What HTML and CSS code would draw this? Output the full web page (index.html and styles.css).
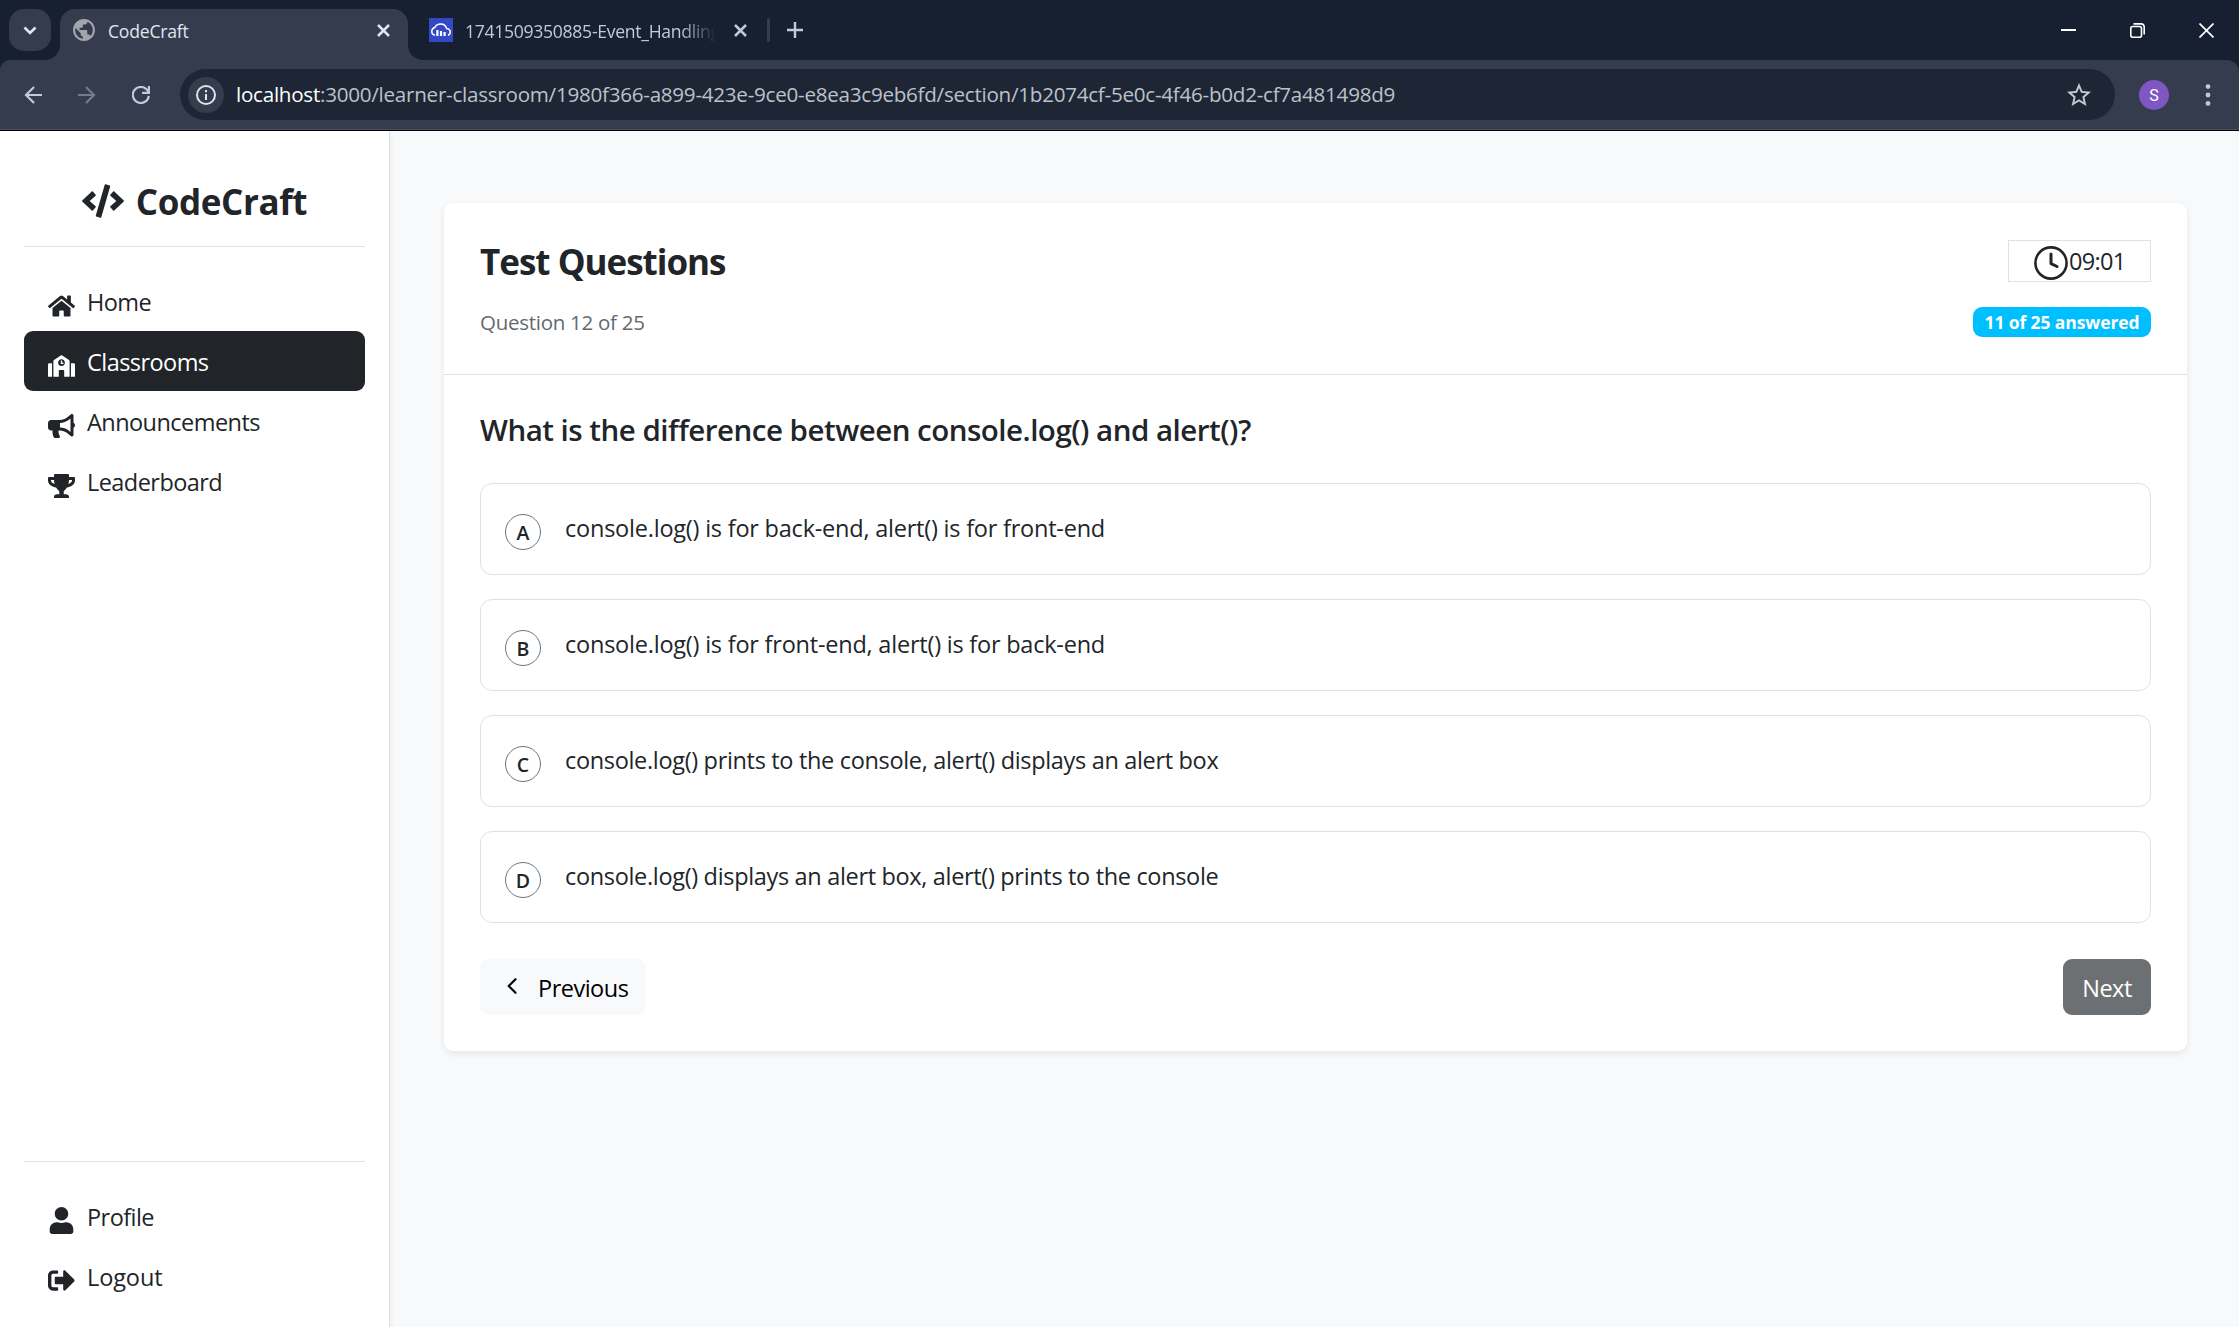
FILE: index.html
```html
<!DOCTYPE html>
<html lang="en">
<head>
<meta charset="utf-8">
<title>CodeCraft</title>
<link rel="stylesheet" href="styles.css">
</head>
<body>
<div class="browser">
  <header class="tabstrip">
    <div class="tab-search">
      <svg width="14" height="9" viewBox="0 0 14 9" fill="none" stroke="currentColor" stroke-width="2.6"><path d="M1.5 1.5 7 7l5.500-5.500"/></svg>
    </div>
    <div class="tab tab-active">
      <svg class="globe" width="22" height="22" viewBox="2 2 20 20" fill="currentColor"><path d="M12 2C6.480 2 2 6.480 2 12s4.480 10 10 10 10-4.480 10-10S17.520 2 12 2zM4 12c0-.610.080-1.210.210-1.780L8.990 15v1c0 1.100.9 2 2 2v1.930C7.060 19.430 4 16.070 4 12zm13.890 5.400c-.260-.810-1-1.400-1.900-1.400h-1v-3c0-.550-.450-1-1-1h-6v-2h2c.550 0 1-.450 1-1V7h2c1.100 0 2-.9 2-2v-.410C17.920 5.770 20 8.650 20 12c0 2.080-.810 3.980-2.110 5.400z"/></svg>
      <span class="tab-title">CodeCraft</span>
      <svg class="x" width="13" height="13" viewBox="0 0 13 13" fill="none" stroke="currentColor" stroke-width="2.500"><path d="M1 1l11 11M12 1 1 12"/></svg>
    </div>
    <div class="tab tab-idle">
      <svg width="24" height="24" viewBox="0 0 24 24"><path fill="#3448c5" d="M0 0h24v24H0z"/><path d="M6 17.200C3.800 16.700 2.600 15 2.800 13c.2-1.900 1.500-3.100 3-3.500C6.800 7.300 9 6 11.700 6c3 0 5.200 1.900 5.900 4.500 2.200.3 3.700 1.600 3.700 3.600 0 1.500-.8 2.600-2.300 3.100" fill="none" stroke="#fff" stroke-width="1.500"/><path d="M7.300 12h2.200v6H7.300zM10.900 13h2.200v5h-2.200zM14.500 14h2.200v4h-2.200z" fill="#fff"/></svg>
      <span class="tab-title tab-title-fade">1741509350885-Event_Handling</span>
      <svg class="x" width="13" height="13" viewBox="0 0 13 13" fill="none" stroke="currentColor" stroke-width="2.500"><path d="M1 1l11 11M12 1 1 12"/></svg>
    </div>
    <span class="tab-sep"></span>
    <svg class="new-tab" width="16" height="16" viewBox="0 0 16 16" stroke="currentColor" stroke-width="2.400"><path d="M8 0v16M0 8h16"/></svg>
    <div class="window-controls">
      <svg width="15" height="15" viewBox="0 0 15 15" stroke="#fff" stroke-width="2"><path d="M0 7h15"/></svg>
      <svg width="15" height="15" viewBox="0 0 15 15" fill="none" stroke="#fff" stroke-width="1.600"><rect x=".8" y="3.500" width="10.700" height="10.700" rx="2"/><path d="M3.500.9H11A3.200 3.200 0 0 1 14.200 4v7.500"/></svg>
      <svg width="15" height="15" viewBox="0 0 15 15" stroke="#fff" stroke-width="1.700"><path d="M.5.5l14 14M14.500.5l-14 14"/></svg>
    </div>
  </header>
  <div class="toolbar-bed">
  <div class="toolbar">
    <svg class="nav-icon" width="18" height="18" viewBox="0 0 18 18" fill="none" stroke="currentColor" stroke-width="2.200"><path d="M18 9H2M10 1 2 9l8 8"/></svg>
    <svg class="nav-icon muted" width="18" height="18" viewBox="0 0 18 18" fill="none" stroke="currentColor" stroke-width="2.200"><path d="M0 9h16M8 1l8 8-8 8"/></svg>
    <svg class="nav-icon" width="18" height="18" viewBox="0 0 18 18" fill="none" stroke="currentColor" stroke-width="2.200"><path d="M16.800 9.800A8 8 0 1 1 14.800 3.600L16.800 6M17 0v6.900h-7"/></svg>
    <div class="omnibox">
      <span class="site-info"><svg width="20" height="20" viewBox="0 0 20 20" fill="none" stroke="currentColor" stroke-width="2"><circle cx="10" cy="10" r="9"/><path d="M10 9v6M10 5v2.200"/></svg></span>
      <span class="url"><b>localhost</b>:3000/learner-classroom/1980f366-a899-423e-9ce0-e8ea3c9eb6fd/section/1b2074cf-5e0c-4f46-b0d2-cf7a481498d9</span>
      <svg class="star" width="24" height="23" viewBox="2 2 20 19" fill="currentColor"><path d="M22 9.240l-7.190-.620L12 2 9.190 8.630 2 9.240l5.460 4.730L5.820 21 12 17.270 18.180 21l-1.630-7.030L22 9.240zM12 15.400l-3.760 2.270 1-4.280-3.320-2.880 4.380-.380L12 6.100l1.710 4.040 4.380.380-3.320 2.880 1 4.280L12 15.400z"/></svg>
    </div>
    <span class="avatar">S</span>
    <svg class="dots" width="6" height="22" viewBox="0 0 6 22" fill="currentColor"><circle cx="3" cy="2.600" r="2.400"/><circle cx="3" cy="11" r="2.400"/><circle cx="3" cy="19.400" r="2.400"/></svg>
  </div>
  </div>
</div>

<div class="app">
  <aside class="sidebar">
    <div class="brand">
      <svg width="42" height="34" viewBox="0 0 640 512" fill="currentColor"><path d="M278.900 511.500l-61-17.700c-6.400-1.800-10-8.500-8.200-14.900L346.200 8.700c1.800-6.400 8.500-10 14.900-8.200l61 17.700c6.400 1.800 10 8.500 8.200 14.900L293.800 503.300c-1.900 6.400-8.500 10.100-14.900 8.200zm-114-112.200l43.500-46.400c4.600-4.900 4.300-12.700-.8-17.200L117 256l90.600-79.700c5.100-4.500 5.500-12.300.8-17.200l-43.500-46.400c-4.500-4.800-12.100-5.100-17-.5L3.800 247.200c-5.100 4.700-5.100 12.800 0 17.500l144.100 135.100c4.900 4.600 12.500 4.400 17-.5zm327.200.6l144.100-135.100c5.100-4.700 5.100-12.800 0-17.500L492.100 112.100c-4.800-4.500-12.400-4.300-17 .5L431.600 159c-4.600 4.900-4.300 12.700.8 17.200L523 256l-90.600 79.700c-5.100 4.500-5.500 12.300-.8 17.200l43.500 46.400c4.500 4.900 12.100 5.100 17 .6z"/></svg>
      <span>CodeCraft</span>
    </div>
    <nav class="menu">
      <a class="item"><svg width="27" height="24" viewBox="0 0 576 512" fill="currentColor"><path d="M280.370 148.260L96 300.110V464a16 16 0 0 0 16 16l112.060-.29a16 16 0 0 0 15.920-16V368a16 16 0 0 1 16-16h64a16 16 0 0 1 16 16v95.640a16 16 0 0 0 16 16.050L464 480a16 16 0 0 0 16-16V300L295.670 148.260a12.190 12.190 0 0 0-15.300 0zM571.600 251.470L488 182.560V44.050a12 12 0 0 0-12-12h-56a12 12 0 0 0-12 12v72.610L318.470 43a48 48 0 0 0-61 0L4.340 251.470a12 12 0 0 0-1.600 16.900l25.500 31A12 12 0 0 0 45.150 301l235.220-193.740a12.190 12.190 0 0 1 15.300 0L530.900 301a12 12 0 0 0 16.900-1.600l25.500-31a12 12 0 0 0-1.700-16.930z"/></svg><span>Home</span></a>
      <a class="item active"><svg width="27" height="22" viewBox="0 0 640 512" fill="currentColor"><path d="M0 224v272c0 8.840 7.160 16 16 16h80V192H32c-17.670 0-32 14.330-32 32zm360-48h-24v-40c0-4.420-3.580-8-8-8h-16c-4.420 0-8 3.580-8 8v64c0 4.420 3.580 8 8 8h48c4.420 0 8-3.580 8-8v-16c0-4.420-3.580-8-8-8zm137.750-63.960l-160-106.670a32.020 32.020 0 0 0-35.500 0l-160 106.670A32.002 32.002 0 0 0 128 138.660V512h128V368c0-8.840 7.160-16 16-16h96c8.840 0 16 7.160 16 16v144h128V138.670c0-10.700-5.350-20.690-14.250-26.630zM320 256c-44.180 0-80-35.820-80-80s35.820-80 80-80 80 35.820 80 80-35.820 80-80 80zm288-64h-64v320h80c8.840 0 16-7.160 16-16V224c0-17.670-14.330-32-32-32z"/></svg><span>Classrooms</span></a>
      <a class="item"><svg width="27" height="24" viewBox="0 0 576 512" fill="currentColor"><path d="M576 240c0-23.630-12.950-44.040-32-55.120V32.010C544 23.260 537.020 0 512 0c-7.120 0-14.190 2.380-19.980 7.020l-85.030 68.030C364.280 109.190 310.660 128 256 128H64c-35.350 0-64 28.650-64 64v96c0 35.350 28.650 64 64 64h33.700c-1.390 10.480-2.180 21.140-2.180 32 0 39.770 9.260 77.350 25.560 110.940 5.190 10.690 16.520 17.060 28.400 17.060h74.280c26.050 0 41.690-29.840 25.900-50.560-16.400-21.520-26.150-48.360-26.150-77.440 0-11.110 1.620-21.790 4.410-32H256c54.660 0 108.280 18.810 150.980 52.950l85.030 68.030a32.023 32.023 0 0 0 19.980 7.020c24.920 0 32-22.780 32-32V295.130C563.050 284.040 576 263.630 576 240zm-96 141.420l-33.050-26.440C392.950 311.780 325.120 288 256 288v-96c69.120 0 136.950-23.780 190.950-66.980L480 98.580v282.840z"/></svg><span>Announcements</span></a>
      <a class="item"><svg width="27" height="24" viewBox="0 0 576 512" fill="currentColor"><path d="M552 64H448V24c0-13.300-10.700-24-24-24H152c-13.300 0-24 10.700-24 24v40H24C10.700 64 0 74.700 0 88v56c0 35.700 22.500 72.400 61.900 100.700 31.500 22.700 69.800 37.100 110 41.700C203.300 338.500 240 360 240 360v72h-48c-35.300 0-64 20.700-64 56v12c0 6.600 5.400 12 12 12h296c6.600 0 12-5.400 12-12v-12c0-35.300-28.700-56-64-56h-48v-72s36.700-21.500 68.100-73.600c40.300-4.600 78.600-19 110-41.700 39.300-28.300 61.900-65 61.900-100.700V88c0-13.300-10.700-24-24-24zM99.300 192.800C74.900 175.200 64 155.600 64 144v-16h64.200c1 32.600 5.800 61.200 12.800 86.200-15.100-5.200-29.200-12.400-41.700-21.400zM512 144c0 16.100-17.700 36.100-35.300 48.800-12.500 9-26.700 16.200-41.800 21.400 7-25 11.800-53.600 12.800-86.200H512v16z"/></svg><span>Leaderboard</span></a>
    </nav>
    <nav class="menu menu-bottom">
      <a class="item"><svg width="27" height="27" viewBox="-32 0 512 512" fill="currentColor"><path d="M224 256c70.700 0 128-57.300 128-128S294.700 0 224 0 96 57.300 96 128s57.300 128 128 128zm89.600 32h-16.700c-22.200 10.200-46.900 16-72.900 16s-50.600-5.800-72.900-16h-16.700C60.200 288 0 348.200 0 422.400V464c0 26.500 21.500 48 48 48h352c26.500 0 48-21.500 48-48v-41.600c0-74.200-60.200-134.400-134.400-134.400z"/></svg><span>Profile</span></a>
      <a class="item item-logout"><svg width="27" height="27" viewBox="0 0 512 512" fill="currentColor"><path d="M497 273L329 441c-15 15-41 4.500-41-17v-96H152c-13.300 0-24-10.700-24-24v-96c0-13.300 10.700-24 24-24h136V88c0-21.400 25.900-32 41-17l168 168c9.300 9.400 9.300 24.600 0 34zM192 436v-40c0-6.600-5.400-12-12-12H96c-17.700 0-32-14.300-32-32V160c0-17.700 14.300-32 32-32h84c6.600 0 12-5.400 12-12V76c0-6.600-5.400-12-12-12H96c-53 0-96 43-96 96v192c0 53 43 96 96 96h84c6.600 0 12-5.400 12-12z"/></svg><span>Logout</span></a>
    </nav>
  </aside>

  <main class="content">
    <section class="card">
      <div class="card-head">
        <div class="head-left">
          <h1>Test Questions</h1>
          <p>Question 12 of 25</p>
        </div>
        <div class="head-right">
          <div class="timer">
            <svg width="34" height="34" viewBox="0 0 34 34" fill="none" stroke="currentColor" stroke-width="2.600" stroke-linecap="round"><circle cx="17" cy="17" r="15.600"/><path d="M17 8v9.600l6 2.900" stroke-width="3" stroke-linejoin="round"/></svg>
            <span>09:01</span>
          </div>
          <span class="badge">11 of 25 answered</span>
        </div>
      </div>
      <div class="card-body">
        <h2>What is the difference between console.log() and alert()?</h2>
        <div class="options">
          <div class="option"><span class="letter">A</span><span class="answer">console.log() is for back-end, alert() is for front-end</span></div>
          <div class="option"><span class="letter">B</span><span class="answer">console.log() is for front-end, alert() is for back-end</span></div>
          <div class="option"><span class="letter">C</span><span class="answer tight">console.log() prints to the console, alert() displays an alert box</span></div>
          <div class="option"><span class="letter">D</span><span class="answer tight">console.log() displays an alert box, alert() prints to the console</span></div>
        </div>
        <div class="actions">
          <button class="btn btn-light"><svg width="10" height="16" viewBox="0 0 10 16" fill="none" stroke="currentColor" stroke-width="2.200" stroke-linecap="round" stroke-linejoin="round"><path d="M8.500 1.200 1.700 8l6.800 6.800"/></svg><span>Previous</span></button>
          <button class="btn btn-dark"><span>Next</span></button>
        </div>
      </div>
    </section>
  </main>
</div>
</body>
</html>
```
FILE: styles.css
```css
* { box-sizing: border-box; }
body {
  margin: 0;
  width: 2239px;
  height: 1327px;
  overflow: hidden;
  display: flex;
  flex-direction: column;
  font-family: "Open Sans", "Noto Sans", sans-serif;
  font-size: 23.5px;
  letter-spacing: -0.22px;
  color: #212529;
  background: #f8f9fb;
  white-space: nowrap;
}
svg { display: block; flex: none; }
h1, h2, p { margin: 0; }

/* Browser frame */
.browser { flex: none; }
.tabstrip {
  height: 60px;
  display: flex;
  align-items: center;
  background: #172030;
  font-size: 17.6px;
}
.tab-search {
  width: 42px;
  height: 42px;
  margin: 0 9px;
  border-radius: 15px;
  background: #343c4d;
  color: #e3e6ee;
  display: flex;
  align-items: center;
  justify-content: center;
}
.tab { display: flex; align-items: center; }
.tab-title { line-height: 24px; padding-top: 2px; }
.tab-active {
  position: relative;
  align-self: flex-end;
  width: 348px;
  height: 51px;
  padding: 0 18px 9px 13px;
  border-radius: 15px 15px 0 0;
  background: #343c4d;
  color: #e3e6ee;
}
.tab-active::before, .tab-active::after {
  content: "";
  position: absolute;
  bottom: 0;
  width: 15px;
  height: 15px;
}
.tab-active::before { left: -15px; background: radial-gradient(circle at 0 0, transparent 14.5px, #343c4d 15.5px); }
.tab-active::after { right: -15px; background: radial-gradient(circle at 100% 0, transparent 14.5px, #343c4d 15.5px); }
.globe { color: #a2a5aa; margin-right: 13px; }
.x { margin-left: auto; }
.tab-idle { width: 320px; margin-left: 21px; color: #c0c9de; }
.tab-idle .x { margin: 0 0 0 18px; }
.tab-title-fade {
  width: 251px;
  margin-left: 12px;
  overflow: hidden;
  letter-spacing: -0.3px;
  -webkit-mask-image: linear-gradient(90deg, #000 215px, transparent 251px);
  mask-image: linear-gradient(90deg, #000 215px, transparent 251px);
}
.tab-sep { width: 3px; height: 24px; border-radius: 2px; background: #343c4d; margin: 0 17px 0 18px; }
.new-tab { color: #c0c9de; }
.window-controls { margin-left: auto; display: flex; gap: 54px; padding-right: 25px; }
.toolbar-bed { background: #172030; }
.toolbar {
  height: 71px;
  padding: 0 28px 1px 24px;
  display: flex;
  align-items: center;
  background: #343c4d;
  border-bottom: 1px solid #000;
  box-shadow: inset 0 -1px 0 #4a5056;
  border-radius: 10px 12px 0 0;
  color: #bccbe3;
}
.nav-icon { margin-right: 36px; }
.nav-icon:nth-child(3) { margin-right: 30px; }
.muted { color: #747b8a; }
.omnibox {
  flex: 1;
  height: 51px;
  border-radius: 26px;
  padding: 0 24px 0 8px;
  display: flex;
  align-items: center;
  background: #1e2636;
  color: #bdc1c9;
  font-size: 20.6px;
  letter-spacing: -0.25px;
}
.site-info {
  width: 36px;
  height: 36px;
  border-radius: 50%;
  background: #343c4d;
  color: #e3e3e6;
  display: flex;
  align-items: center;
  justify-content: center;
}
.url { margin: -2px 0 0 12px; line-height: 28px; }
.url b { font-weight: 400; color: #fff; }
.star { margin-left: auto; color: #c7c7cb; }
.avatar {
  width: 30px;
  height: 30px;
  margin: 0 36px 0 24px;
  border-radius: 50%;
  background: #7e57c2;
  color: #fff;
  font: 16px/31px Roboto, sans-serif;
  text-align: center;
}

/* App shell */
.app { flex: 1; display: flex; min-height: 0; }
.sidebar {
  width: 390px;
  padding: 0 24px 21px;
  border-right: 1px solid #dee2e6;
  background: #fff;
  box-shadow: 0 3px 6px rgba(0, 0, 0, 0.075);
  display: flex;
  flex-direction: column;
}
.brand {
  height: 116px;
  padding-top: 26px;
  border-bottom: 1px solid #dee2e6;
  display: flex;
  align-items: center;
  justify-content: center;
  gap: 12px;
  font-size: 35px;
  font-weight: 700;
  letter-spacing: -0.4px;
}
.brand svg { margin-top: -2px; }
.menu { padding-top: 24px; }
.menu-bottom { margin-top: auto; border-top: 1px solid #dee2e6; }
.item {
  height: 60px;
  padding: 0 24px;
  border-radius: 9px;
  display: flex;
  align-items: center;
  gap: 12px;
  letter-spacing: -0.55px;
}
.item-logout { letter-spacing: -0.1px; }
.item svg { margin-top: 9px; }
.item span { padding-top: 2px; }
.item.active { background: #212529; color: #fff; }

/* Question card */
.content { flex: 1; padding: 72px 52px 0 54px; }
.card {
  height: 848px;
  border-radius: 9px;
  background: #fff;
  box-shadow: 0 3px 6px rgba(0, 0, 0, 0.075);
}
.card-head {
  height: 172px;
  padding: 37px 36px 0 36px;
  border-bottom: 1px solid #dee2e6;
  display: flex;
  justify-content: space-between;
}
h1 { font-size: 35px; line-height: 44px; letter-spacing: -1px; }
.head-left p { margin-top: 22px; font-size: 20.5px; line-height: 32px; letter-spacing: -0.27px; color: #63696f; }
.head-right { display: flex; flex-direction: column; align-items: flex-end; }
.timer {
  width: 143px;
  height: 42px;
  padding: 5px 0 0 25px;
  border: 1px solid #dee2e6;
  display: flex;
  letter-spacing: -0.7px;
}
.timer span { line-height: 30px; margin-left: 1px; }
.badge {
  margin-top: 25px;
  width: 178px;
  height: 30px;
  border-radius: 9px;
  background: #00bfff;
  color: #fff;
  font-size: 17.5px;
  font-weight: 700;
  line-height: 31px;
  letter-spacing: -0.1px;
  text-align: center;
}
.card-body { padding: 36px; }
h2 { font-size: 29.5px; line-height: 38px; font-weight: 600; letter-spacing: -0.5px; }
.options { margin-top: 34px; display: grid; gap: 24px; }
.option {
  height: 92px;
  padding: 0 24px;
  border: 1px solid #dee2e6;
  border-radius: 12px;
  display: flex;
}
.letter {
  width: 36px;
  height: 36px;
  margin-top: 30px;
  border: 1px solid #6c757d;
  border-radius: 50%;
  font-size: 19.5px;
  font-weight: 600;
  line-height: 35px;
  letter-spacing: 0;
  text-align: center;
}
.answer { margin: 26px 0 0 24px; line-height: 36px; }
.tight { letter-spacing: -0.33px; }
.actions { margin-top: 36px; display: flex; justify-content: space-between; }
.btn {
  height: 56px;
  border: 0;
  border-radius: 9px;
  padding: 2px 18px 0;
  font: inherit;
  letter-spacing: -0.5px;
  display: flex;
  align-items: center;
}
.btn-light { width: 166px; background: #f8f9fb; color: #000; padding-left: 27px; gap: 21px; }
.btn-light svg { margin-top: -4px; }
.btn-dark { width: 88px; background: #6c7072; color: #fff; justify-content: center; }
```
